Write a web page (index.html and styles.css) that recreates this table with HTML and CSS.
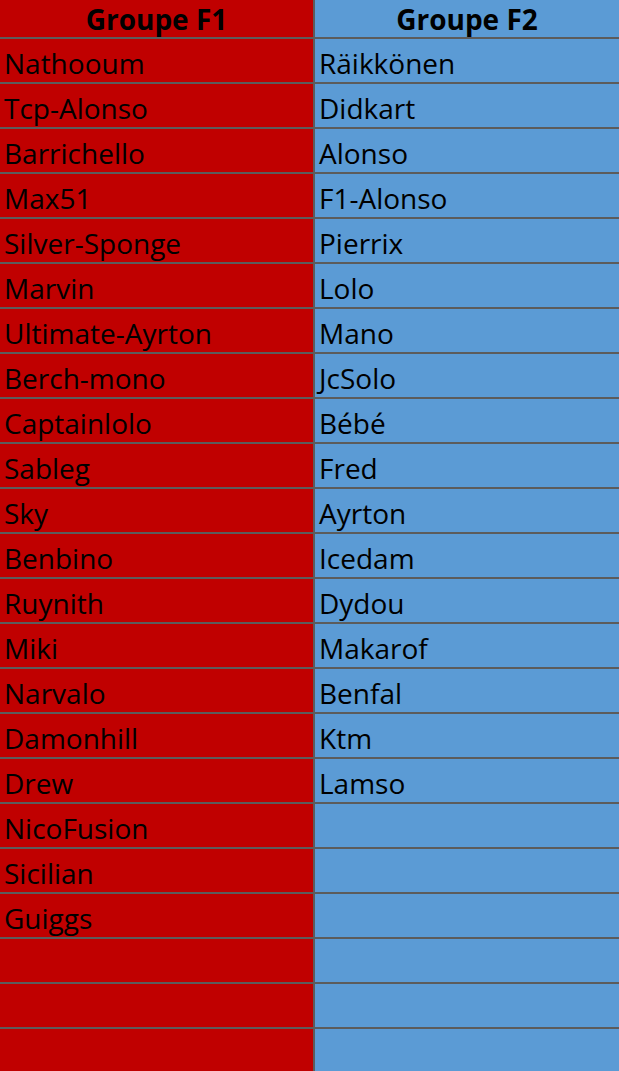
FILE: index.html
```html
<!DOCTYPE html>
<html lang="fr">
<head>
<meta charset="utf-8">
<title>Groupes</title>
<link rel="stylesheet" href="styles.css">
</head>
<body>
<div class="sheet">
  <div class="cell head f1">Groupe F1</div>
  <div class="cell head f2">Groupe F2</div>
  <div class="cell f1">Nathooum</div><div class="cell f2">Räikkönen</div>
  <div class="cell f1">Tcp-Alonso</div><div class="cell f2">Didkart</div>
  <div class="cell f1">Barrichello</div><div class="cell f2">Alonso</div>
  <div class="cell f1">Max51</div><div class="cell f2">F1-Alonso</div>
  <div class="cell f1">Silver-Sponge</div><div class="cell f2">Pierrix</div>
  <div class="cell f1">Marvin</div><div class="cell f2">Lolo</div>
  <div class="cell f1">Ultimate-Ayrton</div><div class="cell f2">Mano</div>
  <div class="cell f1">Berch-mono</div><div class="cell f2">JcSolo</div>
  <div class="cell f1">Captainlolo</div><div class="cell f2">Bébé</div>
  <div class="cell f1">Sableg</div><div class="cell f2">Fred</div>
  <div class="cell f1">Sky</div><div class="cell f2">Ayrton</div>
  <div class="cell f1">Benbino</div><div class="cell f2">Icedam</div>
  <div class="cell f1">Ruynith</div><div class="cell f2">Dydou</div>
  <div class="cell f1">Miki</div><div class="cell f2">Makarof</div>
  <div class="cell f1">Narvalo</div><div class="cell f2">Benfal</div>
  <div class="cell f1">Damonhill</div><div class="cell f2">Ktm</div>
  <div class="cell f1">Drew</div><div class="cell f2">Lamso</div>
  <div class="cell f1">NicoFusion</div><div class="cell f2"></div>
  <div class="cell f1">Sicilian</div><div class="cell f2"></div>
  <div class="cell f1">Guiggs</div><div class="cell f2"></div>
  <div class="cell f1"></div><div class="cell f2"></div>
  <div class="cell f1"></div><div class="cell f2"></div>
  <div class="cell f1"></div><div class="cell f2"></div>
</div>
</body>
</html>
```

FILE: styles.css
```css
html, body {
  margin: 0;
  padding: 0;
  background: #5b9bd5;
  overflow: hidden;
}

.sheet {
  display: grid;
  grid-template-columns: 315px 304px;
  grid-template-rows: 39px;
  grid-auto-rows: 45px;
  width: 619px;
  height: 1071px;
  overflow: hidden;
  font-family: "Open Sans", "Liberation Sans", sans-serif;
  color: #000;
}

.cell {
  box-sizing: border-box;
  border-bottom: 2px solid #5c5c5c;
  font-size: 28px;
  line-height: 43px;
  padding-top: 3px;
  padding-left: 4px;
  white-space: nowrap;
  overflow: hidden;
}

.f1 {
  background: #c00000;
  border-right: 2px solid #5c5c5c;
}

.f2 {
  background: #5b9bd5;
  padding-left: 4px;
}

.head {
  font-weight: 700;
  text-align: center;
  padding-left: 0;
  padding-top: 1px;
  line-height: 36px;
  font-size: 28px;
}
```
